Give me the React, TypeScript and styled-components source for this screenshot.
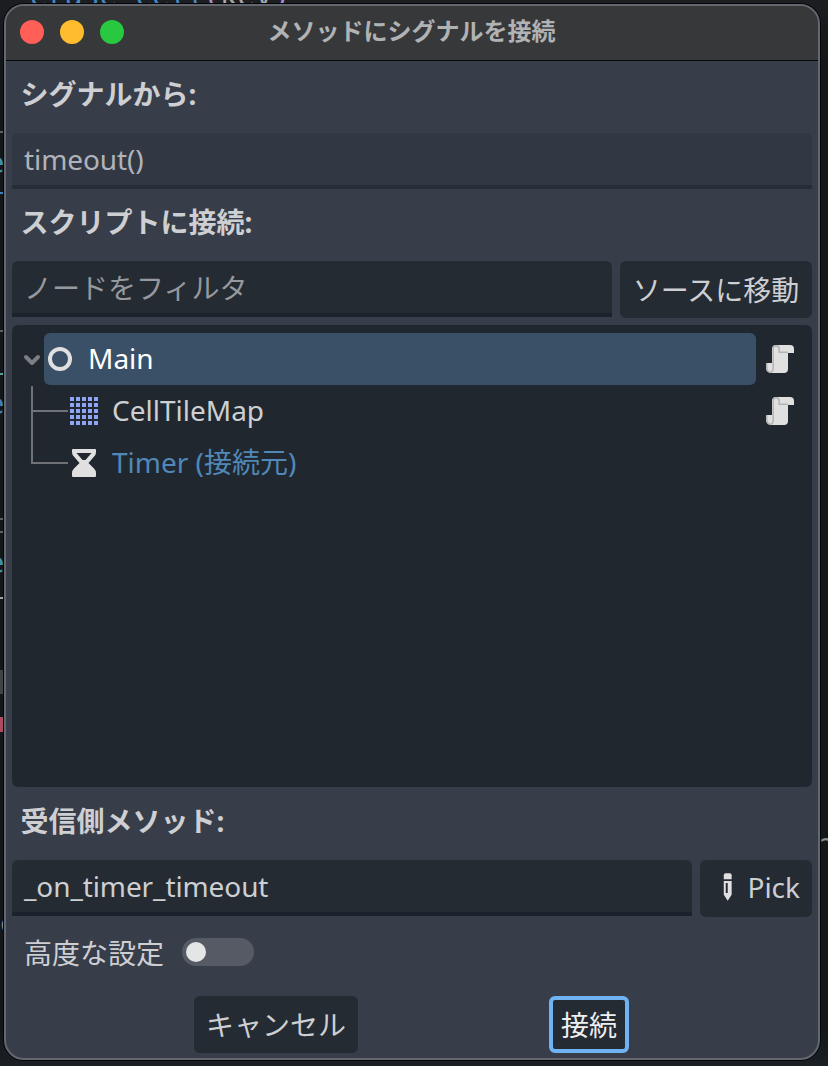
import React from "react";
import styled, { createGlobalStyle } from "styled-components";

const Global = createGlobalStyle`
  * { box-sizing: border-box; }
  body {
    margin: 0;
    background: #15191c;
    font-family: "Noto Sans", "Noto Sans CJK JP", sans-serif;
    font-size: 28px;
    color: #cdcfd2;
  }
`;

const Desktop = styled.div`
  position: relative;
  width: 828px;
  height: 1066px;
  padding: 4px 8px 6px 4px;
  overflow: hidden;
  background: linear-gradient(#1c1e22 0, #131719 60px, #131719 1030px, #1b2025 1066px);
`;

const CodeScrap = styled.span<{ $x: number; $y: number; $color: string }>`
  position: absolute;
  left: ${(p) => p.$x}px;
  top: ${(p) => p.$y}px;
  color: ${(p) => p.$color};
  font: 29px/34px "DejaVu Sans Mono", monospace;
  white-space: pre;
`;

const EdgeMark = styled.i<{ $y: number; $height: number; $color: string }>`
  position: absolute;
  left: 0;
  top: ${(p) => p.$y}px;
  width: 3px;
  height: ${(p) => p.$height}px;
  background: ${(p) => p.$color};
`;

const Dialog = styled.section`
  position: relative;
  display: flex;
  flex-direction: column;
  width: 816px;
  height: 1056px;
  border: 2px solid #64676f;
  border-radius: 20px;
  background: #383d4a;
  box-shadow: 0 0 0 1px #050608;
  overflow: hidden;
`;

const TitleBar = styled.header`
  display: flex;
  align-items: flex-start;
  flex: none;
  height: 55px;
  padding: 0 14px;
  border-bottom: 1px solid #050609;
  background: #37383a;
`;

const Lights = styled.div`
  display: flex;
  gap: 16px;
  padding-top: 14px;
`;

const Light = styled.i<{ $color: string }>`
  width: 24px;
  height: 24px;
  border-radius: 50%;
  background: ${(p) => p.$color};
`;

const Title = styled.h1`
  flex: 1;
  margin: 6px 117px 0 0;
  padding-left: 12px;
  text-align: center;
  font: 700 24px/36px "Noto Sans CJK JP", sans-serif;
  color: #b1b2b4;
`;

const Body = styled.div`
  display: flex;
  flex-direction: column;
  padding: 0 6px;
`;

const Heading = styled.h2<{ $height: number; $top: number }>`
  height: ${(p) => p.$height}px;
  margin: 0;
  padding: ${(p) => p.$top}px 8.500px 0;
  font-size: 28px;
  line-height: 40px;
  font-weight: 700;
`;

const Row = styled.div`
  display: flex;
  gap: 8px;
`;

const Field = styled.div<{ $readOnly?: boolean; $hint?: boolean }>`
  flex: 1;
  height: 56px;
  padding: ${(p) => (p.$hint ? 1 : 0)}px 12px 0;
  line-height: 52px;
  letter-spacing: ${(p) => (p.$hint ? 0 : -0.1)}px;
  border-radius: 6px 6px 0 0;
  border-bottom: 4px solid ${(p) => (p.$readOnly ? "#272d37" : "#1c222b")};
  background: ${(p) => (p.$readOnly ? "#323843" : "#252b33")};
  color: ${(p) => (p.$readOnly ? "#b0b3b9" : p.$hint ? "#96999e" : "#cdcfd2")};
`;

const Button = styled.button<{ $width: number; $focus?: boolean; $icon?: boolean }>`
  display: flex;
  align-items: center;
  justify-content: ${(p) => (p.$icon ? "flex-start" : "center")};
  gap: 4px;
  flex: none;
  width: ${(p) => p.$width}px;
  height: 57px;
  padding: ${(p) => (p.$icon ? "0 12px 3px" : "0")};
  border: ${(p) => (p.$focus ? "4px solid #70b3f2" : "0")};
  border-radius: 6px;
  background: #252b33;
  color: ${(p) => (p.$focus ? "#eeeff0" : "#cdcfd2")};
  font: inherit;
  line-height: 40px;
  white-space: nowrap;
`;

const Tree = styled.div`
  height: 462px;
  margin-top: 7px;
  padding: 8px 8px 0 8px;
  border-radius: 6px;
  background: #21272f;
`;

const TreeRow = styled.div`
  display: flex;
  align-items: center;
  height: 52px;
`;

const Gutter = styled.div<{ $width: number }>`
  flex: none;
  width: ${(p) => p.$width}px;
  height: 52px;
  svg { display: block; }
`;

const Item = styled.div<{ $selected?: boolean; $dim?: boolean }>`
  display: flex;
  align-items: center;
  flex: 1;
  gap: 12px;
  height: 52px;
  padding-left: ${(p) => (p.$selected ? 0 : 2)}px;
  border-radius: 6px;
  background: ${(p) => (p.$selected ? "#3a5067" : "transparent")};
  color: ${(p) => (p.$selected ? "#fff" : p.$dim ? "#5088b8" : "#cdcfd2")};
`;

const Label = styled.span`
  height: 52px;
  line-height: 50px;
`;

const Action = styled.div`
  display: flex;
  justify-content: center;
  width: 48px;
`;

const Options = styled.div`
  display: flex;
  align-items: center;
  gap: 18px;
  height: 56px;
  margin-top: 7px;
  padding-left: 12px;
`;

const Switch = styled.span`
  display: flex;
  align-items: center;
  width: 72px;
  height: 28px;
  padding-left: 4px;
  border-radius: 14px;
  background: #565a65;
`;

const Knob = styled.i`
  width: 20px;
  height: 20px;
  border-radius: 50%;
  background: #e4e5e5;
`;

const Footer = styled.footer`
  display: flex;
  gap: 191px;
  margin-top: 16px;
  padding-left: 182px;
`;

const NodeIcon = () => (
  <svg width="32" height="32" viewBox="0 0 16 16">
    <circle cx="8" cy="8" r="5" fill="none" stroke="#e0e0e0" strokeWidth="2" />
  </svg>
);

const TileMapIcon = () => (
  <svg width="32" height="32" viewBox="0 0 32 32" fill="#8da5f3">
    {[0, 1, 2, 3, 4].map((r) =>
      [0, 1, 2, 3, 4].map((c) => (
        <rect key={`${r}-${c}`} x={2 + c * 6} y={2 + r * 6} width="4" height="4" />
      ))
    )}
  </svg>
);

const TimerIcon = () => (
  <svg width="32" height="32" viewBox="0 0 32 32">
    <path
      fill="#e0e0e0"
      fillRule="evenodd"
      d="M5 2H27Q28 2 28 3V5Q28 7 27 8.500L20.500 16L26 21.500Q28 23.500 28 26V29Q28 30 27 30H5Q4 30 4 29V26Q4 23.500 6 21.500L11.500 16L5 8.500Q4 7 4 5V3Q4 2 5 2ZM8.500 6L14.500 13H17.500L23.500 6Z"
    />
  </svg>
);

const ScriptIcon = () => (
  <svg width="32" height="32" viewBox="0 0 32 32">
    <path
      fill="#e0e0e0"
      d="M12 2H26Q30 2 30 6V10H24V26Q24 30 20 30H8Q2 30 2 24V20H8V6Q8 2 12 2Z"
    />
    <path
      fill="none"
      stroke="#b4b4b4"
      strokeWidth="1.500"
      d="M2.800 20V24Q2.800 29.200 6.500 29.200Q9.200 29 9.200 25V6Q9.200 2.800 12 2.800Q15.200 3 15.200 6V9.300H24"
    />
  </svg>
);

const PencilIcon = () => (
  <svg width="32" height="32" viewBox="0 0 32 32" fill="#e0e0e0">
    <path d="M12 8V4Q12 2 14 2H18Q20 2 20 4V8Z" />
    <path fillRule="evenodd" d="M12 10H20V24L16 30L12 24ZM14 12V22H16V12Z" />
  </svg>
);

const scraps = [
  { x: 30, y: -21, color: "#4689c4", text: "erase_cell" },
  { x: 203, y: -21, color: "#a58fd8", text: "(" },
  { x: 220, y: -21, color: "#a6a8ab", text: "key" },
  { x: 273, y: -21, color: "#a58fd8", text: ")" },
  { x: -13, y: 146, color: "#3b95b5", text: "e" },
  { x: -13, y: 387, color: "#3d80bd", text: "e" },
  { x: -13, y: 546, color: "#3b95b5", text: "e" },
  { x: -1, y: 906, color: "#8b8d8f", text: "c" },
  { x: 820, y: 822, color: "#8b8d8f", text: "~" },
];

const marks = [
  { y: 131, h: 2, color: "#5e6163" },
  { y: 192, h: 2, color: "#3d80bd" },
  { y: 330, h: 2, color: "#5e6163" },
  { y: 373, h: 2, color: "#4fa39b" },
  { y: 518, h: 2, color: "#5e6163" },
  { y: 531, h: 2, color: "#5e6163" },
  { y: 597, h: 2, color: "#a0a2a3" },
  { y: 670, h: 24, color: "#414444" },
  { y: 717, h: 15, color: "#b04a60" },
];

export default function App() {
  return (
    <Desktop>
      <Global />
      {scraps.map((s, i) => (
        <CodeScrap key={i} $x={s.x} $y={s.y} $color={s.color}>{s.text}</CodeScrap>
      ))}
      {marks.map((m) => (
        <EdgeMark key={m.y} $y={m.y} $height={m.h} $color={m.color} />
      ))}
      <Dialog>
        <TitleBar>
          <Lights>
            <Light $color="#ff5f57" />
            <Light $color="#febc2e" />
            <Light $color="#28c840" />
          </Lights>
          <Title>メソッドにシグナルを接続</Title>
        </TitleBar>
        <Body>
          <Heading $height={72} $top={13}>シグナルから:</Heading>
          <Row><Field $readOnly>timeout()</Field></Row>
          <Heading $height={72} $top={13}>スクリプトに接続:</Heading>
          <Row>
            <Field $hint>ノードをフィルタ</Field>
            <Button $width={192}>ソースに移動</Button>
          </Row>
          <Tree>
            <TreeRow>
              <Gutter $width={24}>
                <svg width="24" height="52" fill="none" stroke="#7b7e83" strokeWidth="4" strokeLinecap="round" strokeLinejoin="round">
                  <path d="M6 24L12 30L18 24" />
                </svg>
              </Gutter>
              <Item $selected><NodeIcon /><Label>Main</Label></Item>
              <Action><ScriptIcon /></Action>
            </TreeRow>
            <TreeRow>
              <Gutter $width={46}>
                <svg width="48" height="52" fill="none" stroke="#6f7378" strokeWidth="2">
                  <path d="M12 1V52M12 26H48" />
                </svg>
              </Gutter>
              <Item><TileMapIcon /><Label>CellTileMap</Label></Item>
              <Action><ScriptIcon /></Action>
            </TreeRow>
            <TreeRow>
              <Gutter $width={46}>
                <svg width="48" height="52" fill="none" stroke="#6f7378" strokeWidth="2">
                  <path d="M12 0V26H48" />
                </svg>
              </Gutter>
              <Item $dim><TimerIcon /><Label>Timer (接続元)</Label></Item>
            </TreeRow>
          </Tree>
          <Heading $height={73} $top={14}>受信側メソッド:</Heading>
          <Row>
            <Field>_on_timer_timeout</Field>
            <Button $width={112} $icon><PencilIcon />Pick</Button>
          </Row>
          <Options>高度な設定<Switch><Knob /></Switch></Options>
          <Footer>
            <Button $width={164}>キャンセル</Button>
            <Button $width={80} $focus>接続</Button>
          </Footer>
        </Body>
      </Dialog>
    </Desktop>
  );
}
